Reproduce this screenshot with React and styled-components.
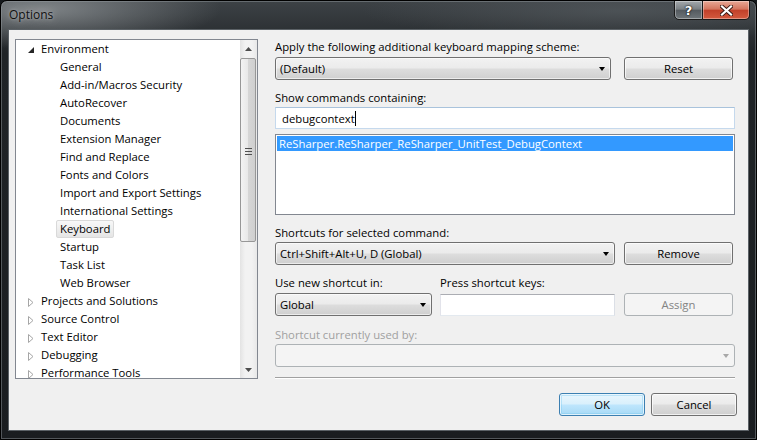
import React from "react";
import styled, { createGlobalStyle, css } from "styled-components";

const GlobalStyle = createGlobalStyle`
  html, body {
    margin: 0;
    padding: 0;
    background: #15191c;
  }
  body {
    font-family: "Open Sans", "Noto Sans", sans-serif;
    font-size: 11.3px;
    color: #000;
  }
`;

const treeItems = [
  { label: "Environment", level: 0, state: "open" },
  { label: "General", level: 1 },
  { label: "Add-in/Macros Security", level: 1 },
  { label: "AutoRecover", level: 1 },
  { label: "Documents", level: 1 },
  { label: "Extension Manager", level: 1 },
  { label: "Find and Replace", level: 1 },
  { label: "Fonts and Colors", level: 1 },
  { label: "Import and Export Settings", level: 1 },
  { label: "International Settings", level: 1 },
  { label: "Keyboard", level: 1, selected: true },
  { label: "Startup", level: 1 },
  { label: "Task List", level: 1 },
  { label: "Web Browser", level: 1 },
  { label: "Projects and Solutions", level: 0, state: "closed" },
  { label: "Source Control", level: 0, state: "closed" },
  { label: "Text Editor", level: 0, state: "closed" },
  { label: "Debugging", level: 0, state: "closed" },
  { label: "Performance Tools", level: 0, state: "closed" },
];

export default function App() {
  return (
    <>
      <GlobalStyle />
      <Window>
        <TitleBar>
          <Title>Options</Title>
          <CaptionGroup>
            <CaptionButton>?</CaptionButton>
            <CaptionButton $close>
              <svg width="13" height="11" viewBox="0 0 13 11">
                <path
                  d="M2 1.5 L11 9.5 M11 1.5 L2 9.5"
                  stroke="#3a1a14"
                  strokeWidth="4"
                  strokeLinecap="square"
                />
                <path
                  d="M2 1.5 L11 9.5 M11 1.5 L2 9.5"
                  stroke="#fff"
                  strokeWidth="2.2"
                  strokeLinecap="square"
                />
              </svg>
            </CaptionButton>
          </CaptionGroup>
        </TitleBar>

        <Client>
          <TreeBox>
            <TreeList>
              {treeItems.map((item) => (
                <TreeRow key={item.label} $level={item.level}>
                  {item.level === 0 && (
                    <Expander>
                      {item.state === "open" ? (
                        <svg width="6" height="6" viewBox="0 0 6 6">
                          <path d="M6 0 L6 6 L0 6 Z" fill="#262626" />
                        </svg>
                      ) : (
                        <svg width="6" height="9" viewBox="0 0 6 9">
                          <path
                            d="M0.5 0.5 L5 4.5 L0.5 8.5 Z"
                            fill="#fff"
                            stroke="#a6a6a6"
                          />
                        </svg>
                      )}
                    </Expander>
                  )}
                  <TreeLabel $selected={item.selected}>{item.label}</TreeLabel>
                </TreeRow>
              ))}
            </TreeList>
            <ScrollBar>
              <ScrollArrow>
                <svg width="7" height="4" viewBox="0 0 7 4">
                  <path d="M0 4 L3.5 0 L7 4 Z" fill="#4d4d4d" />
                </svg>
              </ScrollArrow>
              <ScrollTrack>
                <ScrollThumb>
                  <Grip />
                </ScrollThumb>
              </ScrollTrack>
              <ScrollArrow>
                <svg width="7" height="4" viewBox="0 0 7 4">
                  <path d="M0 0 L7 0 L3.5 4 Z" fill="#4d4d4d" />
                </svg>
              </ScrollArrow>
            </ScrollBar>
          </TreeBox>

          <Panel>
            <Label>Apply the following additional keyboard mapping scheme:</Label>
            <Row $top={3}>
              <Combo $width={336}>
                <ComboText>(Default)</ComboText>
                <ComboArrow />
              </Combo>
              <Button $width={109}>Reset</Button>
            </Row>

            <Label $top={10}>Show commands containing:</Label>
            <TextBox $top={2} $focused>
              debugcontext
              <Caret />
            </TextBox>
            <ListBox>
              <ListItem $selected>
                ReSharper.ReSharper_ReSharper_UnitTest_DebugContext
              </ListItem>
            </ListBox>

            <Label $top={10}>Shortcuts for selected command:</Label>
            <Row $top={2}>
              <Combo $width={340}>
                <ComboText>Ctrl+Shift+Alt+U, D (Global)</ComboText>
                <ComboArrow />
              </Combo>
              <Button $width={109}>Remove</Button>
            </Row>

            <ShortcutGrid>
              <Label>Use new shortcut in:</Label>
              <Label>Press shortcut keys:</Label>
              <span />
              <Combo $width={157}>
                <ComboText>Global</ComboText>
                <ComboArrow />
              </Combo>
              <TextBox $width={175} />
              <Button $width={109} disabled>
                Assign
              </Button>
            </ShortcutGrid>

            <Label $top={11} $disabled>
              Shortcut currently used by:
            </Label>
            <Combo $top={2} $disabled>
              <ComboText />
              <ComboArrow $disabled />
            </Combo>

            <Separator />

            <Footer>
              <Button $width={86} $default>
                OK
              </Button>
              <Button $width={86}>Cancel</Button>
            </Footer>
          </Panel>
        </Client>
      </Window>
    </>
  );
}

const Window = styled.div`
  width: 757px;
  height: 440px;
  box-sizing: border-box;
  display: flex;
  flex-direction: column;
  border: 1px solid #000;
  border-radius: 7px 7px 0 0;
  overflow: hidden;
  background:
    radial-gradient(ellipse 180px 40px at 40px 8px, rgba(150, 155, 158, 0.75), transparent),
    radial-gradient(ellipse 260px 30px at 620px 10px, rgba(90, 96, 100, 0.6), transparent),
    linear-gradient(180deg, #3d4246 0%, #202427 12%, #1a1d20 100%);
  box-shadow: inset 0 0 0 1px rgba(150, 158, 162, 0.45);
`;

const TitleBar = styled.div`
  height: 28px;
  display: flex;
  align-items: flex-start;
  padding: 0 6px 0 8px;
  flex-shrink: 0;
`;

const Title = styled.div`
  font-family: "Open Sans", "Noto Sans", sans-serif;
  font-size: 12px;
  line-height: 28px;
  color: #101010;
  text-shadow: 0 0 8px rgba(255, 255, 255, 0.55), 0 0 3px rgba(255, 255, 255, 0.4);
`;

const CaptionGroup = styled.div`
  margin-left: auto;
  display: flex;
  margin-top: -1px;
`;

const CaptionButton = styled.div`
  height: 20px;
  width: ${(p) => (p.$close ? "47px" : "29px")};
  box-sizing: border-box;
  display: flex;
  align-items: center;
  justify-content: center;
  font-family: "DejaVu Sans", sans-serif;
  font-weight: bold;
  font-size: 13px;
  color: #fff;
  text-shadow: 0 0 2px #000, 0 0 1px #000;
  border: 1px solid #1a1a1a;
  box-shadow: inset 0 0 0 1px rgba(255, 255, 255, 0.35);
  ${(p) =>
    p.$close
      ? css`
          border-radius: 0 0 5px 0;
          border-left: none;
          background: linear-gradient(180deg, #e8a896 0%, #d4765f 45%, #c2412a 52%, #d45a3f 100%);
        `
      : css`
          border-radius: 0 0 0 5px;
          background: linear-gradient(180deg, #a3a8ac 0%, #7b8185 45%, #555b60 52%, #6f767a 100%);
        `}
`;

const Client = styled.div`
  flex: 1;
  margin: 0 7px 8px 7px;
  background: #f0f0f0;
  border: 1px solid #5b6166;
  display: flex;
  align-items: flex-start;
  padding: 9px 0 0 6px;
  gap: 17px;
`;

const TreeBox = styled.div`
  width: 243px;
  height: 340px;
  box-sizing: border-box;
  border: 1px solid #828790;
  background: #fff;
  display: flex;
  overflow: hidden;
`;

const TreeList = styled.div`
  flex: 1;
  overflow: hidden;
`;

const TreeRow = styled.div`
  height: 18px;
  display: flex;
  align-items: center;
  padding-left: ${(p) => (p.$level === 0 ? 12 : 40)}px;
  white-space: nowrap;
`;

const Expander = styled.span`
  width: 9px;
  display: flex;
  align-items: center;
  margin-top: 2px;
`;

const TreeLabel = styled.span`
  padding: 0 3px;
  line-height: 16px;
  border: 1px solid transparent;
  border-radius: 2px;
  ${(p) =>
    p.$selected &&
    css`
      border-color: #d9d9d9;
      background: linear-gradient(180deg, #f8f8f8, #e5e5e5);
    `}
`;

const ScrollBar = styled.div`
  width: 17px;
  display: flex;
  flex-direction: column;
  background: linear-gradient(90deg, #e3e3e3, #f2f2f2 30%, #f2f2f2 70%, #e8e8e8);
`;

const ScrollArrow = styled.div`
  height: 17px;
  display: flex;
  align-items: center;
  justify-content: center;
`;

const ScrollTrack = styled.div`
  flex: 1;
  padding: 1px 1px 0 0;
`;

const ScrollThumb = styled.div`
  height: 184px;
  box-sizing: border-box;
  border: 1px solid #979797;
  border-radius: 2px;
  background: linear-gradient(90deg, #f3f3f3, #e8e8e8 50%, #d6d6d6 52%, #cfcfcf);
  display: flex;
  align-items: center;
  justify-content: center;
`;

const Grip = styled.div`
  width: 7px;
  height: 7px;
  background: repeating-linear-gradient(
    180deg,
    #4f4f4f 0,
    #4f4f4f 1px,
    transparent 1px,
    transparent 3px
  );
  margin-top: 2px;
`;

const Panel = styled.div`
  width: 460px;
  display: flex;
  flex-direction: column;
`;

const Label = styled.div`
  margin-top: ${(p) => p.$top || 0}px;
  height: 15px;
  line-height: 15px;
  white-space: nowrap;
  color: ${(p) => (p.$disabled ? "#a0a0a0" : "#000")};
`;

const Row = styled.div`
  margin-top: ${(p) => p.$top || 0}px;
  display: flex;
  align-items: center;
  padding-right: 2px;
`;

const Combo = styled.div`
  margin-top: ${(p) => p.$top || 0}px;
  width: ${(p) => (p.$width ? `${p.$width}px` : "auto")};
  height: 23px;
  box-sizing: border-box;
  display: flex;
  align-items: center;
  border: 1px solid #707070;
  border-radius: 3px;
  background: linear-gradient(180deg, #f2f2f2 0%, #ebebeb 48%, #dddddd 52%, #cfcfcf 100%);
  box-shadow: inset 0 0 0 1px rgba(255, 255, 255, 0.6);
  ${(p) =>
    p.$disabled &&
    css`
      border-color: #adb2b5;
      background: #f4f4f4;
      box-shadow: none;
    `}
`;

const ComboText = styled.span`
  flex: 1;
  padding-left: 4px;
  white-space: nowrap;
  overflow: hidden;
`;

const ComboArrow = styled.span`
  width: 0;
  height: 0;
  margin-right: 5px;
  border-left: 3.5px solid transparent;
  border-right: 3.5px solid transparent;
  border-top: 4px solid ${(p) => (p.$disabled ? "#a8a8a8" : "#000")};
`;

const Button = styled.button`
  margin-left: auto;
  width: ${(p) => p.$width}px;
  height: 23px;
  box-sizing: border-box;
  font: inherit;
  color: #000;
  border: 1px solid #707070;
  border-radius: 3px;
  background: linear-gradient(180deg, #f2f2f2 0%, #ebebeb 48%, #dddddd 52%, #cfcfcf 100%);
  box-shadow: inset 0 0 0 1px rgba(255, 255, 255, 0.7);
  padding: 0;
  ${(p) =>
    p.$default &&
    css`
      border-color: #3c7fb1;
      background: linear-gradient(180deg, #eaf6fd 0%, #d9f0fc 48%, #bee6fd 52%, #a7d9f5 100%);
      box-shadow: inset 0 0 0 1px rgba(255, 255, 255, 0.7), inset 0 0 0 2px rgba(120, 200, 240, 0.4);
    `}
  &:disabled {
    color: #838383;
    border-color: #adb2b5;
    background: #f4f4f4;
    box-shadow: none;
  }
`;

const TextBox = styled.div`
  margin-top: ${(p) => p.$top || 0}px;
  width: ${(p) => (p.$width ? `${p.$width}px` : "auto")};
  height: 22px;
  box-sizing: border-box;
  display: flex;
  align-items: center;
  padding-left: 6px;
  background: #fff;
  border: 1px solid;
  border-color: #abadb3 #dbdfe6 #e3e9ef #e2e3ea;
  ${(p) =>
    p.$focused &&
    css`
      border-color: #a9c3dc #c5d9ed #c5d9ed #c5d9ed;
    `}
`;

const Caret = styled.span`
  width: 1px;
  height: 15px;
  background: #000;
`;

const ListBox = styled.div`
  margin-top: 5px;
  height: 81px;
  box-sizing: border-box;
  border: 1px solid #828790;
  background: #fff;
  padding: 1px;
`;

const ListItem = styled.div`
  height: 15px;
  line-height: 15px;
  padding-left: 2px;
  white-space: nowrap;
  ${(p) =>
    p.$selected &&
    css`
      background: #3399ff;
      color: #fff;
    `}
`;

const ShortcutGrid = styled.div`
  margin-top: 10px;
  display: grid;
  grid-template-columns: 157px 175px 109px;
  column-gap: 8px;
  row-gap: 3px;
  align-items: center;
  & > button {
    margin-left: 1px;
  }
`;

const Separator = styled.div`
  margin-top: 10px;
  height: 0;
  border-top: 1px solid #a0a0a0;
  border-bottom: 1px solid #fff;
`;

const Footer = styled.div`
  margin-top: 14px;
  margin-right: -2px;
  display: flex;
  justify-content: flex-end;
  gap: 6px;
  & > button {
    margin-left: 0;
  }
`;
